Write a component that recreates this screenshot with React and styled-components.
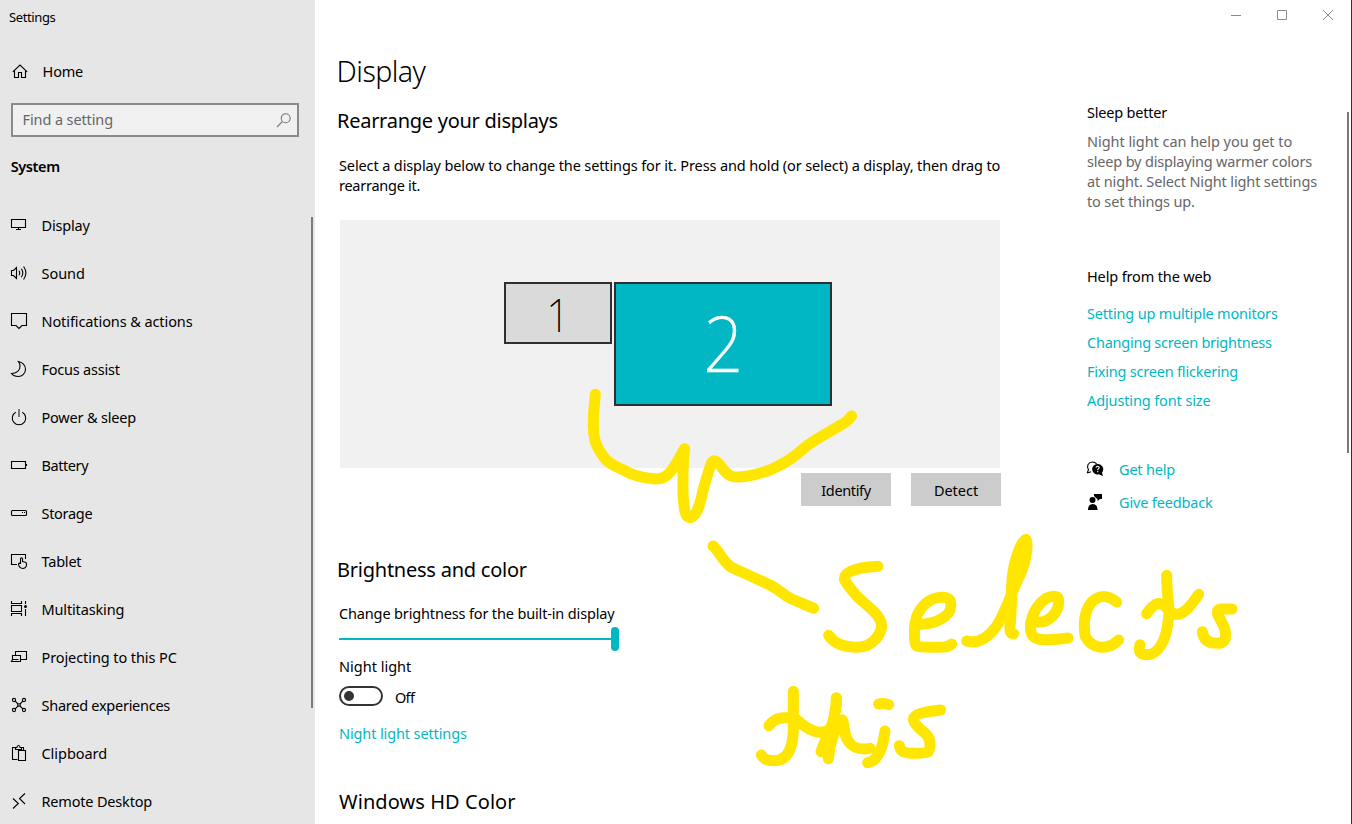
import React from "react";
import styled, { createGlobalStyle, css } from "styled-components";

const ACCENT = "#00b7c3";
const INK = "#ffe600";

const GlobalStyle = createGlobalStyle`
  * { box-sizing: border-box; }
  body { margin: 0; background: #fff; overflow: hidden; }
`;

const textBase = css`
  font-family: "Noto Sans", "Open Sans", sans-serif;
  font-size: 14.5px;
  line-height: 20px;
  letter-spacing: ${(p) => p.$track || 0}px;
  white-space: nowrap;
`;

const Window = styled.div`
  position: relative;
  display: flex;
  width: 1352px;
  height: 824px;
  overflow: hidden;
  background: #fff;
  color: #000;
`;

const Sidebar = styled.aside`
  flex: none;
  width: 315px;
  height: 100%;
  background: #e6e6e6;
  display: flex;
  flex-direction: column;
`;

const WindowTitle = styled.div`
  ${textBase}
  font-size: 13px;
  line-height: 18px;
  padding: 8px 0 0 9px;
`;

const HomeLink = styled.div`
  ${textBase}
  display: flex;
  align-items: center;
  gap: 14.6px;
  height: 20px;
  margin-top: 35px;
  padding-left: 10px;
`;

const SearchBox = styled.div`
  flex: none;
  display: flex;
  justify-content: space-between;
  width: 288px;
  height: 34px;
  margin: 22px 0 0 11px;
  padding: 4px 4px 0 9.6px;
  border: 2px solid #8a8a8a;
  background: #f0f0f0;
`;

const Placeholder = styled.span`
  ${textBase}
  color: #666;
`;

const GroupTitle = styled.div`
  ${textBase}
  font-weight: 600;
  margin: 19px 0 0 10.7px;
`;

const NavArea = styled.div`
  display: flex;
  justify-content: space-between;
  margin-top: 25px;
  padding-right: 2px;
`;

const NavList = styled.nav`
  display: flex;
  flex-direction: column;
`;

const NavItem = styled.div`
  ${textBase}
  display: flex;
  align-items: center;
  gap: 13.5px;
  height: 48px;
  padding-left: 10px;
  line-height: 48px;
`;

const NavScrollThumb = styled.div`
  width: 2px;
  height: 491px;
  margin-top: 16px;
  background: #7a7a7a;
`;

const Icon = styled.svg`
  flex: none;
  display: block;
  width: 18px;
  height: 18px;
  fill: none;
  stroke: #000;
  stroke-width: 1.1;
`;

const SearchIcon = styled(Icon)`
  margin-top: 2px;
  stroke: #777;
`;

const Page = styled.div`
  flex: 1;
  display: flex;
  flex-direction: column;
`;

const TitleBar = styled.div`
  flex: none;
  display: flex;
  justify-content: flex-end;
  align-items: center;
  gap: 34px;
  height: 30px;
  padding-right: 17px;
`;

const CaptionIcon = styled.svg`
  display: block;
  width: 12px;
  height: 12px;
  fill: none;
  stroke: #8c8c8c;
  stroke-width: 1;
`;

const Columns = styled.div`
  flex: 1;
  display: flex;
`;

const Content = styled.main`
  flex: none;
  width: 772px;
  padding: 22px 0 0 24px;
`;

const PageTitle = styled.h1`
  ${textBase}
  margin: 0 0 17px -2.4px;
  font-size: 28.5px;
  line-height: 38px;
  font-weight: 300;
`;

const Heading = styled.h2`
  ${textBase}
  margin: ${(p) => p.$top || 0}px 0 0 ${(p) => p.$nudge || 0}px;
  font-size: 20px;
  line-height: 27px;
  font-weight: 400;
`;

const Paragraph = styled.p`
  ${textBase}
  margin: ${(p) => p.$top || 0}px 0 0;
  color: ${(p) => (p.$muted ? "#666" : "#000")};
`;

const Line = styled.span`
  display: block;
  letter-spacing: ${(p) => p.$track}px;
`;

const Arrangement = styled.div`
  display: flex;
  align-items: flex-start;
  gap: 2px;
  width: 660px;
  height: 248px;
  margin: 25px 0 0 1px;
  padding: 62px 0 0 164px;
  background: #f1f1f1;
`;

const Monitor = styled.div`
  display: flex;
  align-items: center;
  justify-content: center;
  width: ${(p) => p.$w}px;
  height: ${(p) => p.$h}px;
  padding-bottom: ${(p) => (p.$selected ? 5 : 0)}px;
  padding-top: ${(p) => (p.$selected ? 0 : 2)}px;
  border: 2px solid #2f2f33;
  background: ${(p) => (p.$selected ? ACCENT : "#dadada")};
  color: ${(p) => (p.$selected ? "#fff" : "#000")};
  font: 250 ${(p) => p.$size}px/1 "Noto Sans", sans-serif;
`;

const Digit = styled.span`
  transform: scaleX(0.9);
  -webkit-text-stroke: ${(p) => p.$stroke || 0}px currentColor;
`;

const ButtonRow = styled.div`
  display: flex;
  justify-content: flex-end;
  gap: 20px;
  width: 662px;
  margin-top: 5px;
`;

const Button = styled.button`
  ${textBase}
  width: 90px;
  height: 33px;
  padding: 1px 0 0;
  border: 0;
  background: #ccc;
  color: #000;
`;

const Slider = styled.div`
  display: flex;
  align-items: center;
  width: 280px;
  height: 24px;
  margin-top: 4px;
`;

const SliderTrack = styled.div`
  flex: 1;
  height: 2px;
  background: ${ACCENT};
`;

const SliderThumb = styled.div`
  width: 8px;
  height: 24px;
  border-radius: 4px;
  background: ${ACCENT};
`;

const ToggleRow = styled.div`
  display: flex;
  align-items: flex-start;
  gap: 12px;
  height: 20px;
  margin-top: 10px;
`;

const Toggle = styled.div`
  display: flex;
  align-items: center;
  width: 44px;
  height: 20px;
  padding-left: 3px;
  border: 2px solid #333;
  border-radius: 10px;
`;

const ToggleKnob = styled.div`
  width: 10px;
  height: 10px;
  border-radius: 50%;
  background: #333;
`;

const ToggleLabel = styled.span`
  ${textBase}
  padding-top: 1px;
`;

const Link = styled.a`
  ${textBase}
  display: block;
  margin-top: ${(p) => p.$top || 0}px;
  color: ${ACCENT};
`;

const Related = styled.aside`
  flex: none;
  width: 260px;
  padding-top: 72px;
`;

const SupportLinks = styled.div`
  display: flex;
  flex-direction: column;
  gap: 13px;
  margin-top: 49px;
`;

const SupportRow = styled.div`
  display: flex;
  align-items: center;
  gap: 14px;
  height: 20px;
`;

const SupportIcon = styled(Icon)`
  margin-left: -1px;
  margin-right: 1px;
`;

const PageScrollThumb = styled.div`
  width: 2px;
  height: 341px;
  margin-top: 82px;
  background: #7a7a7a;
`;

const WindowEdge = styled.div`
  flex: none;
  width: 1px;
  height: 100%;
  background: #2b2e33;
`;

const Annotation = styled.svg`
  position: absolute;
  inset: 0;
  width: 1352px;
  height: 824px;
  fill: none;
  stroke: ${INK};
  stroke-width: 33;
  stroke-linecap: round;
  stroke-linejoin: round;
  pointer-events: none;
`;

const NAV = [
  ["Display", -0.18, <><path d="M1.5 3.5h14v8h-14zM8.5 12v1.5M6 13.5h5" /></>],
  ["Sound", -0.04, <><path d="M1.5 6.5h2l3-3v11l-3-3h-2zM9 6.8q1.4 2.2 0 4.4M11.3 4.8q3 4.2 0 8.4M13.6 2.5q4.6 6.5 0 13" /></>],
  ["Notifications & actions", -0.09, <><path d="M1.5 1.5h15v12H12l-3 3-3-3H1.5z" /></>],
  ["Focus assist", -0.22, <><path d="M8.3 1.5C12.5 2 15.5 5.3 15.5 9.2c0 4-3.2 7.3-7.2 7.3-2.8 0-5.3-1-6.8-3C6.5 13.5 10.3 10.5 10 6c0-1.8-.7-3.3-1.7-4.5z" /></>],
  ["Power & sleep", -0.19, <><path d="M5.7 4.2a6.7 6.7 0 1 0 6.6 0" /><path d="M9 1v8" stroke="#555" strokeWidth="1.5" /></>],
  ["Battery", -0.42, <><path d="M1.5 5.5h14v7h-14zM16.5 8v2" /></>],
  ["Storage", -0.29, <><rect x="1.5" y="6.5" width="15" height="5" rx="1" /><path d="M12 8.5h1M14 8.5h1" /></>],
  ["Tablet", -0.2, <><path d="M7 12.5H1.5v-10h14V7" /><path d="M10.5 12V6.5q1-1.5 2 0v3l3 .8q1 .4 1 1.7v1q-.4 3.5-4 3.5-2.5 0-3.5-2.5L8.5 12q.5-1.5 2-.5" /></>],
  ["Multitasking", -0.15, <><path d="M1.5 1v2.5h10V1M1.5 5.5h10v6h-10zM1.5 16v-2.5h10V16M15.5 1v3M15.5 9v7" /><circle cx="15.5" cy="6.5" r="1.5" fill="#000" stroke="none" /></>],
  ["Projecting to this PC", -0.09, <><path d="M5.5 7V3.5h11v8H11M2.5 11.5v-4h8v6M2.5 11.5h6M2.5 11.5l-1 2H11" /></>],
  ["Shared experiences", -0.26, <><circle cx="4" cy="4" r="1.6" /><circle cx="14" cy="4" r="1.6" /><circle cx="4" cy="14" r="1.6" /><circle cx="14" cy="14" r="1.6" /><circle cx="9" cy="9" r="1.3" /><path d="M5.2 5.2l2.8 2.8M12.8 5.2L10 8M5.2 12.8L8 10M12.8 12.8L10 10" /></>],
  ["Clipboard", -0.04, <><path d="M7.5 15.5h-5v-12H5M11 3.5h2.5V6M5.5 5.5v-2h1.5q0-2 1.5-2t1.5 2h1.5v2zM8.5 6.5h7v10h-7z" /></>],
  ["Remote Desktop", -0.18, <><path d="M3 6.5l5.3 5L3 16.5M15 1.500l-5.500 5 5.500 5.500" /></>],
];

const HELP_LINKS = [
  ["Setting up multiple monitors", -0.17],
  ["Changing screen brightness", -0.24],
  ["Fixing screen flickering", -0.21],
  ["Adjusting font size", -0.12],
];

function HandwrittenNote() {
  return (
    <Annotation viewBox="0 0 1352 824">
      <g transform="translate(480 260) scale(.33333)">
        <path d="M346 403C342 445 339 470 340 500C341 545 350 562 375 596C385 610 410 620 450 640C480 652 500 655 528 657C570 658 585 615 614 566C607 615 609 660 609 700C612 750 615 772 630 773C655 768 662 720 672 680C682 645 690 620 695 608C703 595 715 608 725 622C745 648 755 652 778 651C810 650 835 642 870 630C900 617 920 607 945 587C970 567 980 555 1010 538L1088 492Q1100 486 1115 468" />
      </g>
      <g transform="translate(690 520) scale(.33333)">
        <path d="M69 78C85 90 98 125 124 142L240 195C270 210 280 225 305 237L350 256Q360 260 371 265" />
        <path d="M564 139C520 141 463 150 463 178C475 200 490 215 500 228L550 273C570 292 576 305 575 322C567 355 540 380 510 381C465 384 435 375 416 346" />
        <path d="M690 313C730 313 782 290 782 262C785 238 775 231 755 232C715 233 682 265 675 310C671 350 674 374 680 378C695 384 720 381 760 381Q777 380 785 372" />
        <path d="M237 617C255 592 280 592 310 593C330 603 345 630 385 637C425 637 430 620 434 580C440 555 439 545 439 534M310 514V615C311 680 295 720 255 722C235 722 222 720 214 705" />
        <path d="M439 534C441 560 430 610 415 640L393 695M430 600L415 716M457 600C462 610 463 630 467 648C480 680 500 692 540 685M457 600C440 615 420 660 415 716" />
        <path d="M566 552Q580 548 596 554M585 633C580 670 570 722 533 728" />
        <path d="M752 570C710 575 672 580 670 598C672 615 697 632 708 642C722 657 724 680 714 696C705 700 685 700 665 700C645 699 632 697 628 677" />
      </g>
      <g transform="translate(960 520) scale(.33333)">
        <path d="M20 363C60 375 90 345 110 318C135 280 155 215 180 165C205 110 203 60 198 58C185 60 156 130 155 200C155 260 153 280 151 310Q146 345 161 341" />
        <path d="M182 90L164 190" />
        <path d="M235 307C270 307 296 275 296 245C296 232 290 229 280 229C250 231 220 265 212 310C208 345 220 358 250 359Q290 360 324 354" />
        <path d="M470 246C445 226 425 226 408 236C370 260 370 315 376 350C395 385 440 395 476 360" />
        <path d="M620 166C620 220 627 250 627 275C625 310 622 335 612 358C595 395 580 404 562 404C540 404 534 395 540 374M560 281C585 245 600 240 625 270C660 305 690 260 716 223" />
        <path d="M816 267H787C770 267 769 277 776 290C790 315 800 330 796 355C792 372 775 370 760 369C740 367 730 355 727 335" />
      </g>
    </Annotation>
  );
}

export default function App() {
  return (
    <Window>
      <GlobalStyle />
      <Sidebar>
        <WindowTitle $track={-0.39}>Settings</WindowTitle>
        <HomeLink $track={-0.19}>
          <Icon viewBox="0 0 18 18"><path d="M2.8 9.8L10 3l7.2 6.800M4.500 8.500v7h4v-5h3v5h4v-7" /></Icon>
          Home
        </HomeLink>
        <SearchBox>
          <Placeholder $track={-0.12}>Find a setting</Placeholder>
          <SearchIcon viewBox="0 0 18 18"><circle cx="10.700" cy="7.300" r="4.500" /><path d="M7.300 10.700L2 16" /></SearchIcon>
        </SearchBox>
        <GroupTitle $track={-0.39}>System</GroupTitle>
        <NavArea>
          <NavList>
            {NAV.map(([label, track, art]) => (
              <NavItem key={label} $track={track}>
                <Icon viewBox="0 0 18 18">{art}</Icon>
                {label}
              </NavItem>
            ))}
          </NavList>
          <NavScrollThumb />
        </NavArea>
      </Sidebar>

      <Page>
        <TitleBar>
          <CaptionIcon viewBox="0 0 12 12"><path d="M1 6.5h10" /></CaptionIcon>
          <CaptionIcon viewBox="0 0 12 12"><path d="M1.5 1.5h9v9h-9z" /></CaptionIcon>
          <CaptionIcon viewBox="0 0 12 12"><path d="M1 1l10 10M11 1L1 11" /></CaptionIcon>
        </TitleBar>
        <Columns>
          <Content>
            <PageTitle $track={-0.55}>Display</PageTitle>
            <Heading $nudge={-2} $track={-0.27}>Rearrange your displays</Heading>
            <Paragraph $top={21}>
              <Line $track={-0.12}>Select a display below to change the settings for it. Press and hold (or select) a display, then drag to</Line>
              <Line $track={-0.26}>rearrange it.</Line>
            </Paragraph>
            <Arrangement>
              <Monitor $w={108} $h={62} $size={46}><Digit>1</Digit></Monitor>
              <Monitor $w={218} $h={124} $size={78} $selected><Digit $stroke={0.6}>2</Digit></Monitor>
            </Arrangement>
            <ButtonRow>
              <Button $track={-0.36}>Identify</Button>
              <Button $track={-0.03}>Detect</Button>
            </ButtonRow>
            <Heading $top={50} $nudge={-2} $track={-0.24}>Brightness and color</Heading>
            <Paragraph $top={20} $track={-0.15}>Change brightness for the built-in display</Paragraph>
            <Slider><SliderTrack /><SliderThumb /></Slider>
            <Paragraph $top={5}>Night light</Paragraph>
            <ToggleRow>
              <Toggle><ToggleKnob /></Toggle>
              <ToggleLabel $track={-0.7}>Off</ToggleLabel>
            </ToggleRow>
            <Link $top={17} $track={-0.12}>Night light settings</Link>
            <Heading $top={45} $track={0.07}>Windows HD Color</Heading>
          </Content>
          <Related>
            <Paragraph $track={-0.2}>Sleep better</Paragraph>
            <Paragraph $top={9} $muted>
              <Line $track={-0.04}>Night light can help you get to</Line>
              <Line $track={-0.18}>sleep by displaying warmer colors</Line>
              <Line $track={-0.13}>at night. Select Night light settings</Line>
              <Line $track={-0.14}>to set things up.</Line>
            </Paragraph>
            <Paragraph $top={55} $track={-0.14}>Help from the web</Paragraph>
            {HELP_LINKS.map(([label, track], i) => (
              <Link key={label} $top={i ? 9 : 17} $track={track}>{label}</Link>
            ))}
            <SupportLinks>
              <SupportRow>
                <SupportIcon viewBox="0 0 18 18">
                  <path d="M1.2 13l1.3-3.2C0 6 2.5 2 6.5 2q2.8 0 4.2 2M1.2 13l4-1.3" />
                  <path d="M11.5 4a5.2 5.2 0 1 0 1.3 10.2l4.2 1.8-1-3.5A5.2 5.2 0 0 0 11.5 4z" fill="#000" stroke="none" />
                  <path d="M10 7.7q.2-1.5 1.7-1.5t1.5 1.4q0 .8-1.4 1.8v.8M11.8 11v1.2" stroke="#fff" />
                </SupportIcon>
                <Link $track={-0.18}>Get help</Link>
              </SupportRow>
              <SupportRow>
                <SupportIcon viewBox="0 0 18 18">
                  <g fill="#000" stroke="none">
                    <circle cx="6.5" cy="7" r="3" />
                    <path d="M2 17q0-6 4.8-6t4.700 6zM8 1h8v5h-2l-2.500 2V6L10 5 8 3z" />
                  </g>
                </SupportIcon>
                <Link $track={-0.15}>Give feedback</Link>
              </SupportRow>
            </SupportLinks>
          </Related>
          <PageScrollThumb />
        </Columns>
      </Page>
      <WindowEdge />
      <HandwrittenNote />
    </Window>
  );
}
